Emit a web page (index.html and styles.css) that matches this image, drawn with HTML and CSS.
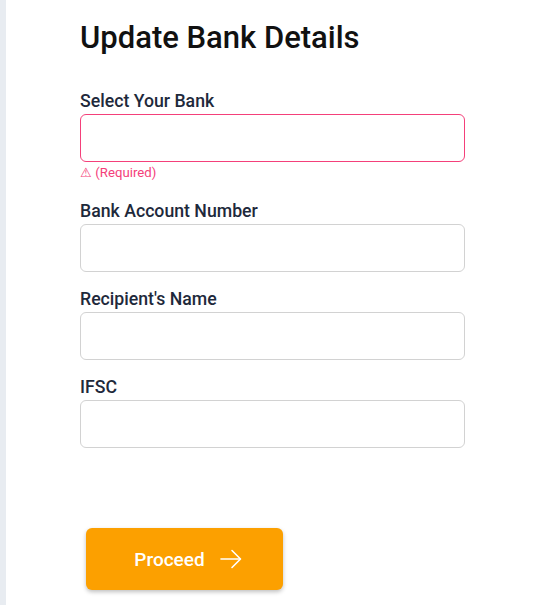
FILE: index.html
```html
<!DOCTYPE html>
<html>
<head>
<meta charset="utf-8">
<link rel="stylesheet" href="styles.css">
</head>
<body>
<div class="shell">
  <div class="rail"></div>
  <main class="content">
    <h1 class="title">Update Bank Details</h1>
    <form class="form">
      <div class="field">
        <label class="label">Select Your Bank</label>
        <div class="input input-error"></div>
        <div class="error">⚠ (Required)</div>
      </div>
      <div class="field">
        <label class="label">Bank Account Number</label>
        <div class="input"></div>
      </div>
      <div class="field">
        <label class="label">Recipient's Name</label>
        <div class="input"></div>
      </div>
      <div class="field">
        <label class="label">IFSC</label>
        <div class="input"></div>
      </div>
    </form>
    <button class="btn" type="button">
      <span>Proceed</span>
      <svg class="arrow" width="24" height="24" viewBox="0 0 24 24" fill="none" stroke="#fff" stroke-width="1.6" stroke-linecap="round" stroke-linejoin="round">
        <path d="M2 12h19"/>
        <path d="M13 3.5l8.5 8.5-8.5 8.5"/>
      </svg>
    </button>
  </main>
</div>
</body>
</html>
```
FILE: styles.css
```css
* { box-sizing: border-box; }
html, body { margin: 0; padding: 0; background: #fff; }
body { font-family: Roboto, "Noto Sans", sans-serif; color: #1c2633; }
.shell { display: flex; min-height: 605px; }
.rail { width: 6px; background: #e8ecf1; flex: none; }
.content { padding: 18px 0 0 74px; width: 459px; }
.title {
  margin: 0;
  font-size: 31px;
  line-height: 40px;
  font-weight: 500;
  color: #111;
}
.form { display: flex; flex-direction: column; gap: 15px; margin-top: 31px; }
.field { display: flex; flex-direction: column; }
.label {
  font-size: 17.7px;
  line-height: 22px;
  font-weight: 500;
  color: #1e293b;
  padding-top: 1px;
  margin-bottom: 2px;
}
.input {
  height: 48px;
  border: 1px solid #d2d2d2;
  border-radius: 6px;
  background: #fff;
}
.input-error { border-color: #f4407a; }
.error {
  margin-top: 3px;
  margin-bottom: 3px;
  font-size: 13.2px;
  line-height: 16px;
  color: #f4407a;
}
.btn {
  margin: 80px 0 0 6px;
  width: 197px;
  height: 62px;
  border: none;
  border-radius: 6px;
  background: #fca000;
  color: #fff;
  font-family: Roboto, sans-serif;
  font-size: 19px;
  font-weight: 500;
  display: flex;
  align-items: center;
  justify-content: center;
  gap: 14px;
  box-shadow: 0 2px 4px rgba(0,0,0,0.25);
  padding: 0 0 0 8px;
}
.arrow { display: block; }
```
